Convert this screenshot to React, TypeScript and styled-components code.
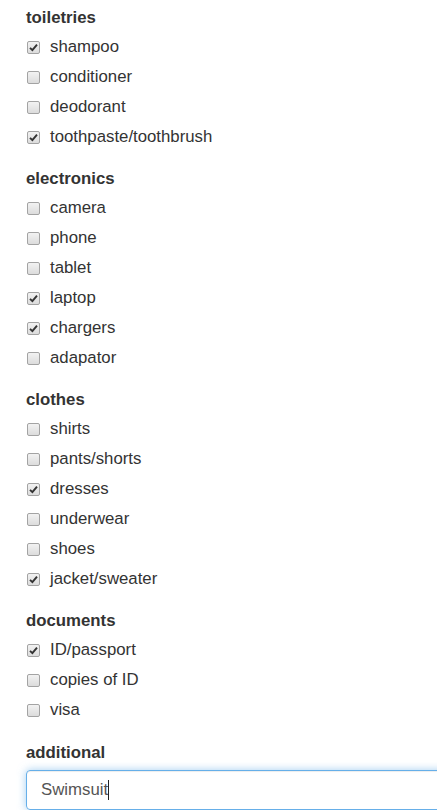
import styled, { createGlobalStyle } from "styled-components";

const Global = createGlobalStyle`
  html, body {
    margin: 0;
    padding: 0;
    background: #fff;
    overflow: hidden;
  }
  body {
    font-family: "Liberation Sans", Arial, Helvetica, sans-serif;
    font-size: 16.8px;
    color: #333;
  }
`;

const Page = styled.div`
  display: flex;
  flex-direction: column;
  gap: 18px;
  padding: 6px 0 0 26px;
`;

const Section = styled.div<{ $extra?: boolean }>`
  display: flex;
  flex-direction: column;
  margin-top: ${(p) => (p.$extra ? "1px" : "0")};
`;

const Heading = styled.div`
  font-weight: bold;
  line-height: 24px;
  margin-bottom: 5px;
`;

const List = styled.div`
  display: flex;
  flex-direction: column;
  gap: 6px;
`;

const Row = styled.label`
  display: flex;
  align-items: center;
  height: 24px;
  line-height: 24px;
`;

const Box = styled.span`
  box-sizing: border-box;
  width: 13px;
  height: 13px;
  margin: 0 10px 0 1px;
  border: 1px solid #a3a3a3;
  border-radius: 2px;
  background: linear-gradient(#f2f2f2, #dcdcdc);
  display: flex;
  align-items: center;
  justify-content: center;
`;

const Field = styled.div`
  box-sizing: border-box;
  width: 430px;
  height: 40px;
  padding: 0 14px;
  border: 1px solid #66afe9;
  border-radius: 4px;
  box-shadow: inset 0 1px 1px rgba(0, 0, 0, 0.075), 0 0 8px rgba(102, 175, 233, 0.6);
  display: flex;
  align-items: center;
  color: #555;
`;

const Caret = styled.span`
  display: inline-block;
  width: 1px;
  height: 20px;
  background: #222;
`;

const groups: { title: string; items: [string, boolean][] }[] = [
  {
    title: "toiletries",
    items: [
      ["shampoo", true],
      ["conditioner", false],
      ["deodorant", false],
      ["toothpaste/toothbrush", true],
    ],
  },
  {
    title: "electronics",
    items: [
      ["camera", false],
      ["phone", false],
      ["tablet", false],
      ["laptop", true],
      ["chargers", true],
      ["adapator", false],
    ],
  },
  {
    title: "clothes",
    items: [
      ["shirts", false],
      ["pants/shorts", false],
      ["dresses", true],
      ["underwear", false],
      ["shoes", false],
      ["jacket/sweater", true],
    ],
  },
  {
    title: "documents",
    items: [
      ["ID/passport", true],
      ["copies of ID", false],
      ["visa", false],
    ],
  },
];

const Check = () => (
  <svg width="9" height="9" viewBox="0 0 9 9">
    <path d="M1 4.8 L3.4 7.2 L8 1.6" fill="none" stroke="#333" strokeWidth="1.9" />
  </svg>
);

export default function App() {
  return (
    <>
      <Global />
      <Page>
        {groups.map((g) => (
          <Section key={g.title}>
            <Heading>{g.title}</Heading>
            <List>
              {g.items.map(([name, checked]) => (
                <Row key={name}>
                  <Box>{checked && <Check />}</Box>
                  {name}
                </Row>
              ))}
            </List>
          </Section>
        ))}
        <Section $extra>
          <Heading>additional</Heading>
          <Field>
            Swimsuit
            <Caret />
          </Field>
        </Section>
      </Page>
    </>
  );
}
